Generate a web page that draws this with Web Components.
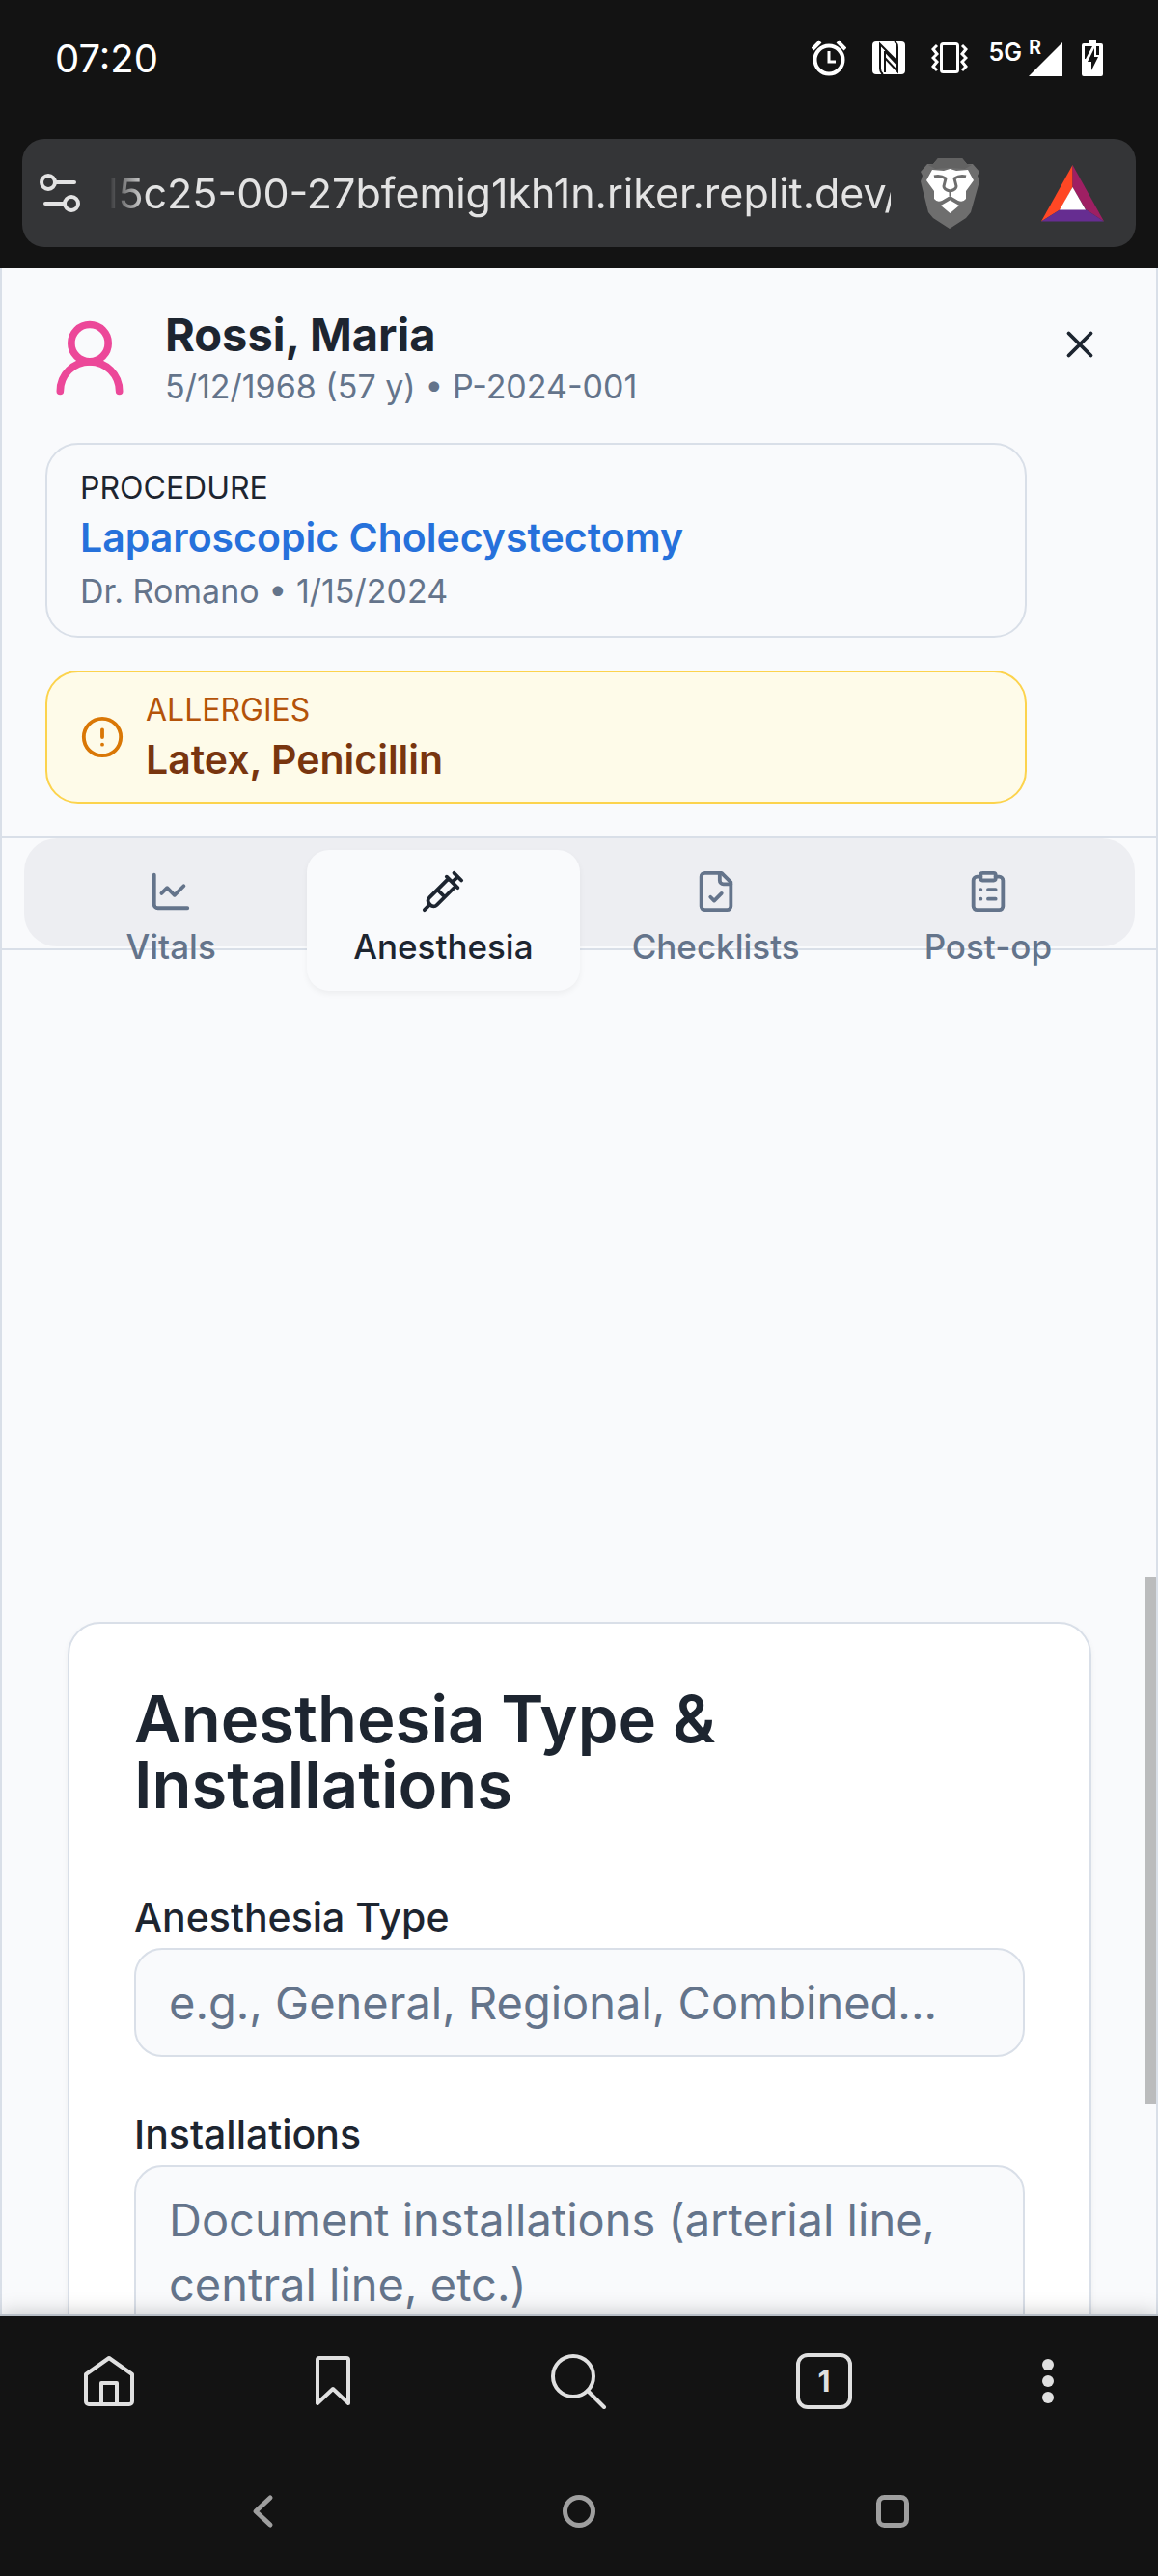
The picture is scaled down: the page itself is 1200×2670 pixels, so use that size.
<!DOCTYPE html>
<html lang="en">
<head>
<meta charset="utf-8">
<meta name="viewport" content="width=device-width, initial-scale=1">
<title>Patient – Anesthesia record</title>
<style>
  html, body { margin: 0; height: 100%; }
  body { font-family: Inter, "Open Sans", sans-serif; background: #131313; }
</style>
</head>
<body>
<phone-screen>
  <status-bar slot="top" time="07:20"></status-bar>
  <address-bar slot="top" url="l5c25-00-27bfemig1kh1n.riker.replit.dev/"></address-bar>
  <patient-header name="Rossi, Maria" details="5/12/1968 (57 y) • P-2024-001">
    <info-card label="PROCEDURE">
      Laparoscopic Cholecystectomy
      <span slot="note">Dr. Romano • 1/15/2024</span>
    </info-card>
    <info-card label="ALLERGIES" tone="warning">Latex, Penicillin</info-card>
  </patient-header>
  <record-tabs>
    <record-tab icon="chart">Vitals</record-tab>
    <record-tab icon="syringe" active>Anesthesia</record-tab>
    <record-tab icon="filecheck">Checklists</record-tab>
    <record-tab icon="clipboard">Post-op</record-tab>
  </record-tabs>
  <form-card heading="Anesthesia Type &amp; Installations">
    <form-field label="Anesthesia Type" placeholder="e.g., General, Regional, Combined..."></form-field>
    <form-field label="Installations" multiline placeholder="Document installations (arterial line, central line, etc.)"></form-field>
  </form-card>
  <browser-toolbar slot="bottom"></browser-toolbar>
  <system-nav slot="bottom"></system-nav>
</phone-screen>

<script>
const line = (size, body, w = 2) =>
  `<svg width="${size}" height="${size}" viewBox="0 0 24 24" fill="none" stroke="currentColor" stroke-width="${w}" stroke-linecap="round" stroke-linejoin="round" aria-hidden="true">${body}</svg>`;

const ICONS = {
  user: line(92, '<circle cx="12" cy="8" r="5"/><path d="M20 21a8 8 0 0 0-16 0"/>'),
  close: line(46, '<path d="M18 6 6 18M6 6l12 12"/>'),
  alert: line(46, '<circle cx="12" cy="12" r="10"/><path d="M12 8v4M12 16h.01"/>'),
  chart: line(46, '<path d="M3 3v16a2 2 0 0 0 2 2h16"/><path d="m19 9-5 5-4-4-3 3"/>'),
  syringe: line(46, '<path d="m18 2 4 4M17 7l3-3M19 9 8.700 19.300c-1 1-2.500 1-3.400 0l-.600-.600c-1-1-1-2.500 0-3.400L15 5M9 11l4 4M5 19l-3 3M14 4l6 6"/>'),
  filecheck: line(46, '<path d="M15 2H6a2 2 0 0 0-2 2v16a2 2 0 0 0 2 2h12a2 2 0 0 0 2-2V7Z"/><path d="M14 2v4a2 2 0 0 0 2 2h4M9 15l2 2 4-4"/>'),
  clipboard: line(46, '<rect x="8" y="2" width="8" height="4" rx="1"/><path d="M16 4h2a2 2 0 0 1 2 2v14a2 2 0 0 1-2 2H6a2 2 0 0 1-2-2V6a2 2 0 0 1 2-2h2M12 11h4M12 16h4M8 11h.01M8 16h.01"/>'),
  site: `<svg width="44" height="44" viewBox="0 0 44 44" fill="none" stroke="#e3e3e3" stroke-width="4" stroke-linecap="round"><circle cx="10" cy="11" r="7"/><path d="M18 11h19"/><circle cx="34" cy="33" r="7"/><path d="M26 33H7"/></svg>`,
  lion: `<svg width="63" height="73" viewBox="0 0 63 73"><path fill="#6e6e6e" d="M19 0h25l5 6 6 0 7 8-2 4 2 6-9 32-5 6-17 11-17-11-5-6L1 24l2-6-2-4 7-8h6z"/><path fill="#626262" d="M19 0h25l5 6 5 1-7 4-15-1-16 1-7-4 5-1z"/><path fill="#fff" d="M13 12l12 1 6.500-2 6.500 2 12-1 6 11-8 11v8q-3 4-8 2l-8.500-5-8.500 5q-5 2-8-2v-8L7 23z"/><path fill="#fff" d="M31.500 43.500 41 49l-9.500 8-9.500-8z"/><g fill="none" stroke="#6e6e6e" stroke-width="3" stroke-linejoin="round"><path d="M15 19c4-1 9 0 12 2l-1 4-1 4c0 3 2 4 6.500 5 4.500-1 6.500-2 6.500-5l-1-4-1-4c3-2 8-3 12-2"/><path stroke-width="2" d="M31.500 33v6"/></g></svg>`,
  bat: `<svg width="65" height="59" viewBox="0 0 65 59"><path fill="#ff4724" d="M32.500 0v23L20 46 0 58.500z"/><path fill="#9e1f63" d="M32.500 0v23L46 46l19 12.500z"/><path fill="#662d91" d="M0 58.500 20 46h26l19 12.500z"/><path fill="#fff" d="M32.500 23 46 46.500H19z"/></svg>`,
  alarm: `<svg width="36" height="38" viewBox="0 0 36 38" fill="none" stroke="#fff" stroke-width="4"><circle cx="18" cy="21" r="14.500"/><path stroke-width="3" d="M18 12v11h7"/><path d="M1 10l8-8M35 10l-8-8"/></svg>`,
  nfc: `<svg width="34" height="34" viewBox="0 0 34 34"><rect width="34" height="34" rx="4" fill="#fff"/><path fill="none" stroke="#131313" stroke-width="2" d="M11 34q-3-2-3-6V3l17 17M13 32V10M23 0q3 2 3 6v25L13 17M13 10l12 13"/></svg>`,
  vibrate: `<svg width="38" height="32" viewBox="0 0 38 32" fill="none" stroke="#fff" stroke-width="3"><rect x="10.500" y="1.500" width="17" height="29" rx="2"/><path d="M6 3 2 7l4 5-4 4 4 4-4 5 4 4M32 3l4 4-4 5 4 4-4 4 4 5-4 4"/></svg>`,
  battery: `<svg width="22" height="38" viewBox="0 0 22 38"><path fill="#fff" d="M7 0h8v4h5a2 2 0 0 1 2 2v30a2 2 0 0 1-2 2H2a2 2 0 0 1-2-2V6a2 2 0 0 1 2-2h5z"/><path fill="#131313" d="M3 7h8L4 20H3zM15 7h3v9h-3zM13 9v9h4l-7 14v-9H6z"/></svg>`,
  home: `<svg width="58" height="58" viewBox="0 0 58 58" fill="none" stroke="#e0e0e0" stroke-width="4" stroke-linejoin="round"><path d="M5 22 29 5l24 17v28a3 3 0 0 1-3 3H8a3 3 0 0 1-3-3zM21 53V31h16v22"/></svg>`,
  bookmark: `<svg width="58" height="58" viewBox="0 0 58 58" fill="none" stroke="#e0e0e0" stroke-width="4" stroke-linejoin="round"><path d="M13 7a2 2 0 0 1 2-2h28a2 2 0 0 1 2 2v45L29 37 13 52z"/></svg>`,
  search: `<svg width="58" height="58" viewBox="0 0 58 58" fill="none" stroke="#e0e0e0" stroke-width="4" stroke-linecap="round"><circle cx="23" cy="24" r="21"/><path d="M38 39l17 17"/></svg>`,
  dots: `<svg width="58" height="58" viewBox="0 0 58 58" fill="#e0e0e0"><circle cx="29" cy="12" r="6"/><circle cx="29" cy="29" r="6"/><circle cx="29" cy="46" r="6"/></svg>`,
  back: `<svg width="36" height="36" viewBox="0 0 36 36" fill="none" stroke="#9f9f9f" stroke-width="5" stroke-linecap="round" stroke-linejoin="round"><path d="M23 4 8 18l15 14"/></svg>`,
  circle: `<svg width="36" height="36" viewBox="0 0 36 36" fill="none" stroke="#9f9f9f" stroke-width="5"><circle cx="18" cy="18" r="14.500"/></svg>`,
  square: `<svg width="36" height="36" viewBox="0 0 36 36" fill="none" stroke="#9f9f9f" stroke-width="5"><rect x="3.500" y="3.500" width="29" height="29" rx="6"/></svg>`
};

const BASE = `
  *, *::before, *::after { box-sizing: border-box; }
  svg { display: block; flex: none; }
  button { font: inherit; color: inherit; background: none; border: 0; padding: 0; margin: 0; cursor: pointer; display: flex; align-items: center; justify-content: center; }
`;

const define = (tag, view) => customElements.define(tag, class extends HTMLElement {
  connectedCallback() {
    if (this.shadowRoot) return;
    const t = document.createElement('template');
    const a = n => (this.getAttribute(n) || '').replace(/&/g, '&amp;').replace(/"/g, '&quot;');
    const { css, html } = view(a, this);
    t.innerHTML = `<style>${BASE}${css}</style>${html}`;
    this.attachShadow({ mode: 'open' }).append(t.content.cloneNode(true));
  }
});

define('phone-screen', () => ({
  css: `
    :host { display: flex; flex-direction: column; height: 100vh; overflow: hidden; }
    main { position: relative; flex: 1; min-height: 0; overflow: hidden; background: #f9fafc; border: solid #d9dfe8; border-width: 0 2px; }
    .thumb { position: absolute; right: 0; top: 64%; height: 546px; width: 11px; background: #bbbcbd; }`,
  html: `<slot name="top"></slot><main><slot></slot><div class="thumb"></div></main><slot name="bottom"></slot>`
}));

define('status-bar', a => ({
  css: `
    :host { display: flex; align-items: center; justify-content: space-between; height: 120px; padding: 0 57px; color: #fff; background: #131313; font-size: 40px; }
    .icons { display: flex; align-items: center; gap: 27px; }
    .net { display: flex; align-items: flex-start; gap: 6px; margin: 0 -7px 0 -5px; }
    .g { font-size: 25px; line-height: 26px; font-weight: 600; }
    .signal { position: relative; width: 36px; height: 38px; }
    .signal svg { position: absolute; right: 0; bottom: 0; }
    .signal span { position: absolute; left: 1px; top: 0; font-size: 20px; line-height: 16px; font-weight: 600; }`,
  html: `<span>${a('time')}</span><div class="icons">${ICONS.alarm}${ICONS.nfc}${ICONS.vibrate}
    <div class="net"><span class="g">5G</span><div class="signal"><span>R</span><svg width="35" height="35" viewBox="0 0 35 35"><path fill="#fff" d="M35 0v35H0z"/></svg></div></div>${ICONS.battery}</div>`
}));

define('address-bar', a => ({
  css: `
    :host { display: block; padding: 24px 23px 22px; background: #131313; }
    .bar { display: flex; align-items: center; height: 112px; padding: 0 33px 0 17px; border-radius: 23px; background: #343537; }
    input { flex: 1; min-width: 0; margin: 0 30px 0 28px; padding: 0; border: 0; outline: 0; background: none; color: #e3e3e3; font: 43px Inter, sans-serif; height: 60px;
      -webkit-mask-image: linear-gradient(90deg, transparent, #000 40px); mask-image: linear-gradient(90deg, transparent, #000 40px); }
    .bat { margin-left: 63px; }`,
  html: `<div class="bar"><button aria-label="Site settings">${ICONS.site}</button><input type="text" aria-label="Address" value="${a('url')}">
    <button aria-label="Brave Shields">${ICONS.lion}</button><button class="bat" aria-label="Brave Rewards">${ICONS.bat}</button></div>`
}));

define('patient-header', a => ({
  css: `
    :host { display: flex; align-items: flex-start; gap: 10px; padding: 39px 34px 34px 45px; border-bottom: 2px solid #d9dfe8; }
    .info { flex: 1; min-width: 0; display: flex; flex-direction: column; gap: 34px; }
    .who { display: flex; align-items: center; gap: 32px; }
    .who svg { color: #ec4899; }
    h1 { margin: 0; font-size: 47px; line-height: 60px; font-weight: 700; color: #1d2530; }
    p { margin: 0; font-size: 34px; line-height: 48px; color: #64748b; }
    button { width: 90px; height: 80px; color: #1d2530; }`,
  html: `<div class="info"><div class="who">${ICONS.user}<div><h1>${a('name')}</h1><p>${a('details')}</p></div></div><slot></slot></div>
    <button aria-label="Close">${ICONS.close}</button>`
}));

define('info-card', (a, el) => ({
  css: `
    :host { display: flex; align-items: center; gap: 22px; padding: 22px 34px 18px; border: 2px solid #d9dfe8; border-radius: 34px; color: #2671db; }
    :host([tone=warning]) { padding-block: 16px; background: #fefbe9; border-color: #fcd34d; color: #78350f; }
    svg { color: #d97706; }
    .label { font-size: 32px; line-height: 46px; color: #1d2530; }
    :host([tone=warning]) .label { color: #b45309; }
    .value { font-size: 41px; line-height: 56px; font-weight: 600; }
    slot[name=note] { display: block; }
    ::slotted([slot=note]) { display: block; font-size: 34px; line-height: 56px; font-weight: 400; color: #64748b; }`,
  html: `${el.getAttribute('tone') ? ICONS.alert : ''}<div><div class="label">${a('label')}</div><div class="value"><slot></slot></div><slot name="note"></slot></div>`
}));

define('record-tabs', () => ({
  css: `
    :host { display: block; height: 114px; padding: 0 22px 0 23px; border-bottom: 2px solid #d9dfe8; }
    div { display: grid; grid-template-columns: repeat(4, 1fr); align-items: start; height: 112px; padding: 12px 11px; border-radius: 34px; background: #edeef2; }`,
  html: `<div role="tablist"><slot></slot></div>`
}));

define('record-tab', (a, el) => ({
  css: `
    :host { display: block; color: #64748b; }
    button { width: 100%; flex-direction: column; gap: 10px; padding: 20px 0 22px; border-radius: 23px; font-size: 35px; line-height: 48px; font-weight: 500; }
    :host([active]) button { color: #1d2530; background: #f9fafc; box-shadow: 0 3px 6px rgba(0,0,0,.05); }`,
  html: `<button role="tab" aria-selected="${el.hasAttribute('active')}">${ICONS[a('icon')]}<span><slot></slot></span></button>`
}));

define('form-card', a => ({
  css: `
    :host { display: block; padding: 696px 67px 0 68px; }
    section { padding: 65px 67px; border: 2px solid #d9dfe8; border-radius: 34px; background: #fff; box-shadow: 0 3px 6px rgba(0,0,0,.05); }
    h2 { margin: 0 0 75px; font-size: 67px; line-height: 68px; font-weight: 600; color: #1d2530; }
    .fields { display: flex; flex-direction: column; gap: 52px; }`,
  html: `<section><h2>${a('heading')}</h2><div class="fields"><slot></slot></div></section>`
}));

define('form-field', (a, el) => ({
  css: `
    :host { display: flex; flex-direction: column; gap: 4px; }
    label { font-size: 41px; line-height: 56px; font-weight: 500; color: #1d2530; }
    input, textarea { display: block; width: 100%; margin: 0; padding: 21px 34px; border: 2px solid #d9dfe8; border-radius: 29px; outline: 0; resize: none; background: #f9fafc; color: #1d2530; font: 47px/67px Inter, sans-serif; }
    textarea { height: 230px; overflow: hidden; }
    ::placeholder { color: #64748b; opacity: 1; }`,
  html: `<label for="f">${a('label')}</label>` + (el.hasAttribute('multiline')
    ? `<textarea id="f" placeholder="${a('placeholder')}"></textarea>`
    : `<input id="f" type="text" placeholder="${a('placeholder')}">`)
}));

define('browser-toolbar', () => ({
  css: `
    :host { position: relative; display: grid; grid-template-columns: 226fr 238fr 272fr 236fr 228fr; justify-items: center; padding: 39px 0 38px; border-top: 2px solid #b9c0c8; background: #131313; box-shadow: 0 0 20px rgba(0,0,0,.22); }
    .count { width: 58px; height: 58px; border: 4px solid #e0e0e0; border-radius: 12px; color: #e0e0e0; font-size: 30px; line-height: 32px; font-weight: 700; }`,
  html: `<button aria-label="Home">${ICONS.home}</button><button aria-label="Bookmarks">${ICONS.bookmark}</button><button aria-label="Search">${ICONS.search}</button>
    <button class="count" aria-label="Tabs">1</button><button aria-label="Menu">${ICONS.dots}</button>`
}));

define('system-nav', () => ({
  css: `
    :host { position: relative; display: grid; grid-template-columns: repeat(3, 1fr); justify-items: center; align-items: center; height: 135px; padding: 0 112px; background: #131313; }`,
  html: `<button aria-label="Back">${ICONS.back}</button><button aria-label="Home screen">${ICONS.circle}</button><button aria-label="Recent apps">${ICONS.square}</button>`
}));
</script>
</body>
</html>
